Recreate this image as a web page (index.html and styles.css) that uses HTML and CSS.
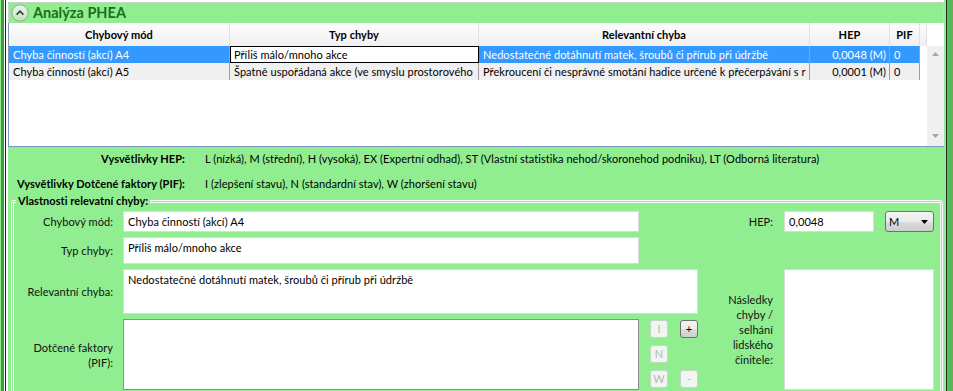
FILE: index.html
```html
<!DOCTYPE html>
<html lang="cs">
<head>
<meta charset="utf-8">
<title>Analýza PHEA</title>
<link rel="stylesheet" href="styles.css">
</head>
<body>
<div class="screen">
  <div class="edge-left"></div>
  <div class="main">
    <section class="expander">
      <header class="exp-head">
        <span class="exp-btn">
          <svg width="18" height="18" viewBox="0 0 18 18">
            <defs>
              <linearGradient id="eg" x1="0" y1="0" x2="0" y2="1">
                <stop offset="0" stop-color="#eef7ee"/>
                <stop offset="1" stop-color="#b9e4b9"/>
              </linearGradient>
            </defs>
            <circle cx="9" cy="9" r="8.2" fill="url(#eg)" stroke="#9aa59a" stroke-width="1"/>
            <path d="M5.6 10.6 L9 7.2 L12.4 10.6" fill="none" stroke="#3a3a3a" stroke-width="1.6"/>
          </svg>
        </span>
        <h1 class="exp-title">Analýza PHEA</h1>
      </header>

      <div class="datagrid">
        <div class="dg-main">
          <div class="dg-row dg-head">
            <div class="th">Chybový mód</div>
            <div class="th">Typ chyby</div>
            <div class="th">Relevantní chyba</div>
            <div class="th">HEP</div>
            <div class="th">PIF</div>
            <div class="th"></div>
          </div>
          <div class="dg-row sel">
            <div class="td">Chyba činností (akcí) A4</div>
            <div class="td focus">Příliš málo/mnoho akce</div>
            <div class="td">Nedostatečné dotáhnutí matek, šroubů či přírub při údržbě</div>
            <div class="td num">0,0048 (M)</div>
            <div class="td">0</div>
            <div class="fill"></div>
          </div>
          <div class="dg-row alt">
            <div class="td">Chyba činností (akcí) A5</div>
            <div class="td">Špatně uspořádaná akce (ve smyslu prostorového</div>
            <div class="td">Překroucení či nesprávné smotání hadice určené k přečerpávání s r</div>
            <div class="td num">0,0001 (M)</div>
            <div class="td">0</div>
            <div class="fill"></div>
          </div>
        </div>
        <div class="vscroll">
          <svg width="7" height="4" viewBox="0 0 7 4"><path d="M0 4 L3.5 0 L7 4 Z" fill="#a6a6a6"/></svg>
          <svg width="7" height="4" viewBox="0 0 7 4"><path d="M0 0 L7 0 L3.5 4 Z" fill="#a6a6a6"/></svg>
        </div>
      </div>

      <dl class="legend">
        <dt>Vysvětlivky HEP:</dt>
        <dd>L (nízká), M (střední), H (vysoká), EX (Expertní odhad), ST (Vlastní statistika nehod/skoronehod podniku), LT (Odborná literatura)</dd>
        <dt>Vysvětlivky Dotčené faktory (PIF):</dt>
        <dd>I (zlepšení stavu), N (standardní stav), W (zhoršení stavu)</dd>
      </dl>

      <fieldset class="props">
        <legend>Vlastnosti relevatní chyby:</legend>
        <div class="form">
          <div class="lbl r1">Chybový mód:</div>
          <div class="field r1 c2">Chyba činností (akcí) A4</div>
          <div class="lbl lbl-r r1">HEP:</div>
          <div class="hep r1">
            <div class="field hep-val">0,0048</div>
            <div class="combo"><span>M</span>
              <svg width="7" height="4" viewBox="0 0 7 4"><path d="M0 0 L7 0 L3.5 4 Z" fill="#000"/></svg>
            </div>
          </div>

          <div class="lbl r2">Typ chyby:</div>
          <div class="field r2 c2">Příliš málo/mnoho akce</div>

          <div class="lbl r3">Relevantní chyba:</div>
          <div class="field r3 c23">Nedostatečné dotáhnutí matek, šroubů či přírub při údržbě</div>

          <div class="lbl lbl-r lbl-wrap r34">Následky chyby / selhání lidského činitele:</div>
          <div class="field r34 c5"></div>

          <div class="lbl lbl-pif r4">Dotčené faktory (PIF):</div>
          <div class="field dark r4 c2"></div>
          <div class="pif-btns r4">
            <button class="btn b-i" type="button">I</button>
            <button class="btn on b-add" type="button">+</button>
            <button class="btn b-n" type="button">N</button>
            <button class="btn b-w" type="button">W</button>
            <button class="btn b-del" type="button">-</button>
          </div>
        </div>
      </fieldset>
    </section>
  </div>
  <div class="edge-right"></div>
</div>
</body>
</html>
```

FILE: styles.css
```css
* { box-sizing: border-box; }
html, body { margin: 0; padding: 0; }
body {
  width: 953px;
  height: 391px;
  overflow: hidden;
  background: #fff;
  font-family: Lato, "Open Sans", sans-serif;
  font-size: 11px;
  letter-spacing: 0.05px;
  color: #000;
}
.screen { display: flex; height: 391px; overflow: hidden; }
.edge-left {
  width: 8px; flex: none;
  background: linear-gradient(to right, #90ee90 0 1px, #3f9f3f 1px 4px, #fff 4px 5px, #1e1e1e 5px 6px, #fff 6px 8px);
}
.edge-right {
  width: 9px; flex: none;
  background: linear-gradient(to right, #90ee90 0 2px, #2b2b2b 2px 3px, #55b955 3px 9px);
}
.main { flex: 1; min-width: 0; padding-top: 2px; display: flex; flex-direction: column; }
.expander { flex: 1; background: #90ee90; display: flex; flex-direction: column; }

.exp-head {
  height: 21px; flex: none;
  display: flex; align-items: center; gap: 4px;
  padding-left: 2px;
  border: 1px solid #c3d6c3; border-bottom: none;
  border-radius: 3px 3px 0 0;
}
.exp-btn { display: flex; width: 18px; height: 18px; }
.exp-title { margin: 0; font-size: 14.5px; letter-spacing: 0; font-weight: bold; color: #1a6e1a; line-height: 1; }

.datagrid {
  height: 124px; flex: none;
  display: flex;
  background: #fff;
  border-left: 1px solid #7a96b8;
  border-bottom: 1px solid #7a96b8;
}
.dg-main { flex: 1; min-width: 0; }
.dg-row {
  display: grid;
  grid-template-columns: 221px 249px 331px 80px 30px 7px;
  height: 17px;
}
.dg-head { height: 23px; background: linear-gradient(#fcfcfc, #f0f0f0); }
.th { border-right: 1px solid #e1e1e1; font-weight: bold; text-align: center; line-height: 23px; }
.td {
  border-right: 1px solid #a0a0a0;
  padding: 0 4px;
  line-height: 17px;
  white-space: nowrap;
  overflow: hidden;
}
.fill { background: #fff; }
.sel { background: #3399ff; color: #fff; }
.alt { background: #f0f0f0; }
.td.focus { background: #fff; color: #000; border: 1px solid #000; line-height: 15px; padding-left: 3px; }
.td.num { text-align: right; padding-right: 3px; }

.vscroll {
  width: 17px; flex: none;
  margin-top: 23px;
  background: #f0f0f0;
  display: flex; flex-direction: column; justify-content: space-between; align-items: center;
  padding: 6px 0 8px;
}

.legend {
  display: grid;
  grid-template-columns: 177px 1fr;
  column-gap: 20px;
  row-gap: 10px;
  margin: 0;
  padding-top: 4px;
  line-height: 15px;
}
.legend dt { font-weight: bold; text-align: right; white-space: nowrap; }
.legend dd { margin: 0; white-space: nowrap; }

.props {
  flex: none;
  height: 215px;
  margin: 2px 1px 0 3px;
  padding: 3px 8px 0 0;
  border: 1px solid #fff;
  border-radius: 3px;
  box-shadow: inset 0 0 0 1px #90ee90, inset 0 0 0 2px #f6fff6;
  min-width: 0;
}
.props legend {
  margin-left: 4px;
  padding: 0 2px;
  font-weight: bold;
  line-height: 15px;
  background: #90ee90;
}

.form {
  display: grid;
  grid-template-columns: 111px 516px 59px 86px 150px;
  grid-template-rows: 21px 27px 45px 71px;
  row-gap: 5px;
}
.r1 { grid-row: 1; }
.r2 { grid-row: 2; }
.r3 { grid-row: 3; }
.r4 { grid-row: 4; }
.r34 { grid-row: 3 / 5; }
.c2 { grid-column: 2; }
.c23 { grid-column: 2 / 4; }
.c5 { grid-column: 5; }

.lbl {
  grid-column: 1;
  justify-self: end;
  align-self: center;
  padding-right: 10px;
  text-align: right;
  line-height: 15px;
  color: #111;
}
.lbl-r { grid-column: 4; padding-right: 11px; }
.lbl-wrap { width: 61px; }
.lbl-pif { width: 96px; }

.field {
  background: #fff;
  border: 1px solid #dadada;
  padding: 2px 4px;
  line-height: 15px;
  white-space: nowrap;
  overflow: hidden;
}
.field.dark { border-color: #8d8d8d; }

.hep { grid-column: 5; display: flex; gap: 11px; }
.hep-val { width: 90px; }
.combo {
  width: 49px;
  border: 1px solid #707070;
  border-radius: 3px;
  background: linear-gradient(#f3f3f3, #ebebeb 50%, #dddddd 50%, #cdcdcd);
  display: flex; align-items: center; justify-content: space-between;
  padding: 0 5px 0 3px;
  line-height: 15px;
}

.pif-btns {
  grid-column: 3;
  display: grid;
  grid-template-columns: 18px 18px;
  grid-template-rows: 18px 18px 18px;
  column-gap: 12px;
  row-gap: 7px;
  margin: 1px 0 0 11px;
  align-content: start;
}
.btn {
  width: 18px; height: 18px;
  padding: 0;
  border: 1px solid #c6d6c6;
  border-radius: 3px;
  background: #f1f5f1;
  color: #b3bab3;
  font-family: inherit;
  font-size: 11px;
  line-height: 16px;
  text-align: center;
}
.btn.on {
  border-color: #707070;
  background: linear-gradient(#f3f3f3, #ebebeb 50%, #dddddd 50%, #cdcdcd);
  color: #000;
}
.b-i { grid-column: 1; grid-row: 1; }
.b-add { grid-column: 2; grid-row: 1; }
.b-n { grid-column: 1; grid-row: 2; }
.b-w { grid-column: 1; grid-row: 3; }
.b-del { grid-column: 2; grid-row: 3; }
```
